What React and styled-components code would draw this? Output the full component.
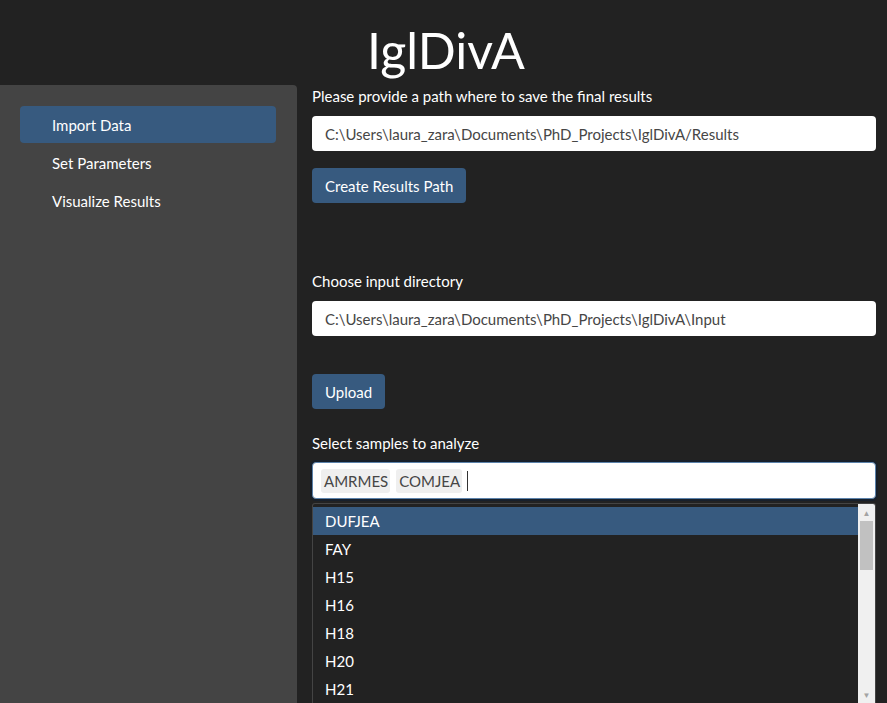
import styled, { createGlobalStyle } from "styled-components";

const GlobalStyle = createGlobalStyle`
  html, body {
    margin: 0;
    padding: 0;
    background: #222222;
    color: #ffffff;
    font-family: Lato, "Open Sans", "Liberation Sans", sans-serif;
    font-size: 15px;
  }
  * { box-sizing: border-box; }
`;

const Page = styled.div`
  width: 887px;
  height: 703px;
  overflow: hidden;
  display: flex;
  flex-direction: column;
`;

const Header = styled.div`
  height: 85px;
  display: flex;
  align-items: center;
  justify-content: center;
  padding-left: 5px;
`;

const Title = styled.h1`
  margin: 0;
  padding-top: 14px;
  font-size: 50px;
  font-weight: 400;
  line-height: 1;
  color: #ffffff;
`;

const Body = styled.div`
  flex: 1;
  display: flex;
  min-height: 0;
`;

const Sidebar = styled.div`
  width: 297px;
  flex-shrink: 0;
  background: #444444;
  border-radius: 0 4px 0 0;
  padding: 21px 21px 0 20px;
  display: flex;
  flex-direction: column;
  gap: 1px;
`;

const NavItem = styled.div`
  height: 37px;
  display: flex;
  align-items: center;
  padding-left: 32px;
  border-radius: 4px;
  color: #ffffff;
  background: ${(p) => (p.$active ? "#375a7f" : "transparent")};
`;

const Main = styled.div`
  flex: 1;
  padding: 1px 11px 0 15px;
  display: flex;
  flex-direction: column;
`;

const Label = styled.div`
  line-height: 21px;
  margin-top: ${(p) => p.$top || 0}px;
  margin-bottom: ${(p) => p.$bottom ?? 9}px;
`;

const TextInput = styled.div`
  height: 35px;
  background: #ffffff;
  border-radius: 4px;
  padding: 0 13px;
  display: flex;
  align-items: center;
  color: #464646;
  white-space: nowrap;
`;

const Button = styled.div`
  align-self: flex-start;
  margin-top: ${(p) => p.$top}px;
  height: 35px;
  padding: 0 13px;
  display: flex;
  align-items: center;
  background: #375a7f;
  border-radius: 4px;
  color: #ffffff;
`;

const Selectize = styled.div`
  height: 37px;
  background: #ffffff;
  border: 1px solid #5b82ab;
  border-radius: 4px;
  box-shadow: 0 0 0 2px #17202c;
  padding: 0 8px;
  display: flex;
  align-items: center;
  gap: 6px;
`;

const Chip = styled.span`
  background: #efefef;
  color: #464646;
  border-radius: 3px;
  padding: 2px 2px 2px 3px;
  line-height: 20px;
`;

const Caret = styled.span`
  width: 1px;
  height: 20px;
  background: #333333;
  margin-left: -1px;
`;

const Dropdown = styled.div`
  margin-top: 4px;
  flex: 1;
  min-height: 0;
  border: 1px solid #444444;
  border-bottom: none;
  border-radius: 3px 3px 0 0;
  background: #222222;
  display: flex;
  overflow: hidden;
`;

const Options = styled.div`
  flex: 1;
  padding-top: 3px;
`;

const Option = styled.div`
  height: 28px;
  padding-left: 12px;
  display: flex;
  align-items: center;
  color: #ffffff;
  background: ${(p) => (p.$active ? "#375a7f" : "transparent")};
`;

const Scrollbar = styled.div`
  width: 17px;
  background: #f0f0f0;
  display: flex;
  flex-direction: column;
  align-items: center;
`;

const Arrow = styled.div`
  height: 17px;
  display: flex;
  align-items: center;
  justify-content: center;
  color: #a3a3a3;
  font-size: 8px;
  line-height: 1;
`;

const Thumb = styled.div`
  width: 13px;
  height: 49px;
  background: #c1c1c1;
`;

const Track = styled.div`
  flex: 1;
`;

const options = ["DUFJEA", "FAY", "H15", "H16", "H18", "H20", "H21"];

export default function App() {
  return (
    <Page>
      <GlobalStyle />
      <Header>
        <Title>IglDivA</Title>
      </Header>
      <Body>
        <Sidebar>
          <NavItem $active>Import Data</NavItem>
          <NavItem>Set Parameters</NavItem>
          <NavItem>Visualize Results</NavItem>
        </Sidebar>
        <Main>
          <Label>Please provide a path where to save the final results</Label>
          <TextInput>
            C:\Users\laura_zara\Documents\PhD_Projects\IglDivA/Results
          </TextInput>
          <Button $top={17}>Create Results Path</Button>
          <Label $top={68}>Choose input directory</Label>
          <TextInput>
            C:\Users\laura_zara\Documents\PhD_Projects\IglDivA\Input
          </TextInput>
          <Button $top={38}>Upload</Button>
          <Label $top={24} $bottom={8}>
            Select samples to analyze
          </Label>
          <Selectize>
            <Chip>AMRMES</Chip>
            <Chip>COMJEA</Chip>
            <Caret />
          </Selectize>
          <Dropdown>
            <Options>
              {options.map((o, i) => (
                <Option key={o} $active={i === 0}>
                  {o}
                </Option>
              ))}
            </Options>
            <Scrollbar>
              <Arrow>▲</Arrow>
              <Thumb />
              <Track />
              <Arrow>▼</Arrow>
            </Scrollbar>
          </Dropdown>
        </Main>
      </Body>
    </Page>
  );
}
